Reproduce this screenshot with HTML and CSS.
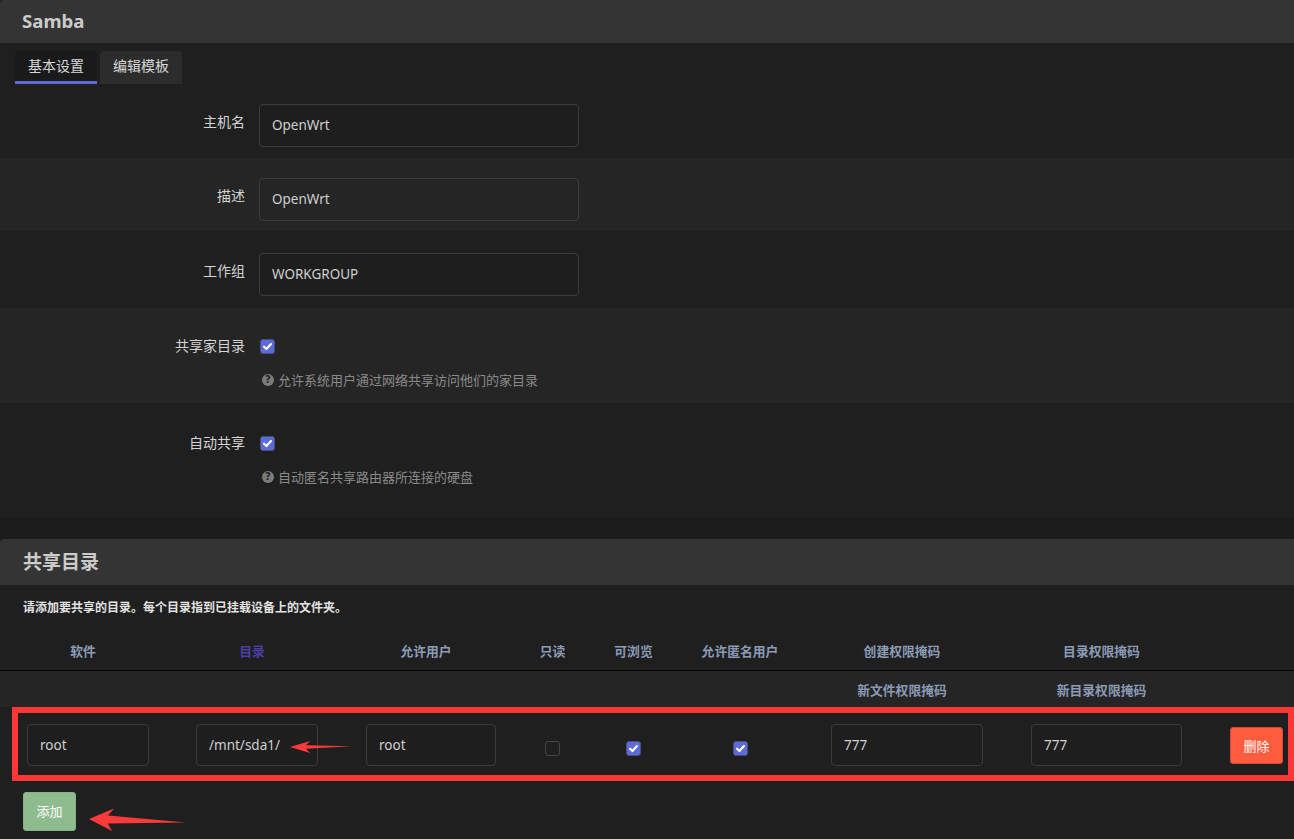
FILE: index.html
```html
<!DOCTYPE html>
<html lang="zh-CN">
<head>
<meta charset="utf-8">
<title>Samba</title>
<link rel="stylesheet" href="styles.css">
</head>
<body>
<div class="page">
  <section class="sec">
    <h2 class="sec-title">Samba</h2>
    <div class="tabs">
      <div class="tab active">基本设置</div>
      <div class="tab">编辑模板</div>
    </div>
    <div class="row r1">
      <label class="lbl">主机名</label>
      <div class="field"><div class="input">OpenWrt</div></div>
    </div>
    <div class="row r2 alt">
      <label class="lbl">描述</label>
      <div class="field"><div class="input">OpenWrt</div></div>
    </div>
    <div class="row r3">
      <label class="lbl">工作组</label>
      <div class="field"><div class="input">WORKGROUP</div></div>
    </div>
    <div class="row r4 alt">
      <label class="lbl">共享家目录</label>
      <div class="field">
        <div class="cbline"><span class="cb on"><svg viewBox="0 0 14 14"><path d="M3.3 7.2 L5.9 9.7 L10.7 4.4"/></svg></span></div>
        <div class="help"><span class="qi">?</span>允许系统用户通过网络共享访问他们的家目录</div>
      </div>
    </div>
    <div class="row r5">
      <label class="lbl">自动共享</label>
      <div class="field">
        <div class="cbline"><span class="cb on"><svg viewBox="0 0 14 14"><path d="M3.3 7.2 L5.9 9.7 L10.7 4.4"/></svg></span></div>
        <div class="help"><span class="qi">?</span>自动匿名共享路由器所连接的硬盘</div>
      </div>
    </div>
  </section>

  <section class="sec sec2">
    <h2 class="sec-title big">共享目录</h2>
    <div class="desc">请添加要共享的目录。每个目录指到已挂载设备上的文件夹。</div>
    <div class="thead t1">
      <div class="th in">软件</div>
      <div class="th in link">目录</div>
      <div class="th in">允许用户</div>
      <div class="th">只读</div>
      <div class="th">可浏览</div>
      <div class="th">允许匿名用户</div>
      <div class="th in">创建权限掩码</div>
      <div class="th in">目录权限掩码</div>
      <div class="th"></div>
    </div>
    <div class="thead t2">
      <div class="th"></div>
      <div class="th"></div>
      <div class="th"></div>
      <div class="th"></div>
      <div class="th"></div>
      <div class="th"></div>
      <div class="th in">新文件权限掩码</div>
      <div class="th in">新目录权限掩码</div>
      <div class="th"></div>
    </div>
    <div class="trow">
      <div class="td"><div class="input sm w122">root</div></div>
      <div class="td"><div class="input sm w122">/mnt/sda1/</div></div>
      <div class="td"><div class="input sm w130">root</div></div>
      <div class="td"><span class="cb off"></span></div>
      <div class="td"><span class="cb on"><svg viewBox="0 0 14 14"><path d="M3.3 7.2 L5.9 9.7 L10.7 4.4"/></svg></span></div>
      <div class="td"><span class="cb on"><svg viewBox="0 0 14 14"><path d="M3.3 7.2 L5.9 9.7 L10.7 4.4"/></svg></span></div>
      <div class="td"><div class="input sm w152">777</div></div>
      <div class="td"><div class="input sm w151">777</div></div>
      <div class="td left"><button class="btn del">删除</button></div>
    </div>
    <div class="actions"><button class="btn add">添加</button></div>
  </section>

  <svg class="annot" viewBox="0 0 1294 839" width="1294" height="839">
    <polygon points="290,747 310,741 306,745.2 352,746.2 306,748.8 310,753"/>
    <polygon points="89,819 114,808.5 108,815.5 186,822.5 108,823.5 112,831"/>
  </svg>
</div>
</body>
</html>
```

FILE: styles.css
```css
html, body {
  margin: 0;
  padding: 0;
}
body {
  background: #1b1b1b;
  font-family: "Noto Sans", "Noto Sans CJK SC", sans-serif;
  color: #d6d6d6;
  width: 1294px;
  height: 839px;
  overflow: hidden;
}
.page {
  position: relative;
  width: 1294px;
  height: 839px;
}
.sec {
  background: #1f1f1f;
}
.sec-title {
  margin: 0;
  height: 43px;
  line-height: 41px;
  padding-left: 22px;
  background: #343434;
  font-size: 18.6px;
  font-weight: 700;
  color: #cbcbcb;
  border-top-left-radius: 4px;
}
.sec-title.big {
  height: 46px;
  line-height: 46px;
  font-size: 19px;
  padding-left: 23px;
}
.tabs {
  display: flex;
  align-items: flex-end;
  gap: 3px;
  height: 41px;
  padding-left: 15px;
  box-sizing: border-box;
}
.tab {
  height: 33px;
  box-sizing: border-box;
  padding: 0 13px;
  line-height: 30px;
  font-size: 14px;
  color: #d8d8d8;
  background: #2c2c2c;
  border-radius: 4px 4px 0 0;
}
.tab.active {
  background: #1a1a1a;
  border-bottom: 3px solid #5e6bd9;
  padding: 0 13px;
}
.row {
  display: flex;
  align-items: flex-start;
  gap: 14px;
  box-sizing: border-box;
  padding-top: 20px;
}
.row.alt {
  background: #252525;
}
.r1 { height: 74px; }
.r2 { height: 72px; }
.r3 { height: 78px; padding-top: 23px; }
.r4 { height: 95px; padding-top: 20px; }
.r5 { height: 116px; padding-top: 22px; }
.lbl {
  width: 245px;
  text-align: right;
  font-size: 14px;
  line-height: 36px;
  color: #d4d4d4;
}
.input {
  width: 320px;
  height: 43px;
  box-sizing: border-box;
  border: 1px solid #3b3b3b;
  border-radius: 4px;
  background: #1e1e1e;
  padding: 0 12px;
  line-height: 41px;
  font-size: 13.5px;
  color: #cfcfcf;
}
.row.alt .input {
  background: #252525;
}
.cbline {
  height: 36px;
  display: flex;
  align-items: center;
  padding-left: 1px;
}
.cb {
  display: inline-block;
  width: 15px;
  height: 15px;
  box-sizing: border-box;
  border-radius: 3px;
}
.cb.on {
  background: #5d6ada;
  border: 1px solid #4a4f7a;
}
.cb.on svg {
  display: block;
  width: 13px;
  height: 13px;
}
.cb.on path {
  fill: none;
  stroke: #fff;
  stroke-width: 2.3;
  stroke-linecap: round;
  stroke-linejoin: round;
}
.cb.off {
  border: 1px solid #454545;
  background: #1f1f1f;
}
.help {
  margin-top: 8px;
  display: flex;
  align-items: center;
  font-size: 13px;
  line-height: 16px;
  color: #8a8a8a;
  padding-left: 3px;
}
.qi {
  display: inline-block;
  width: 12px;
  height: 12px;
  border-radius: 50%;
  background: #7b7b7b;
  color: #252525;
  font-size: 10px;
  font-weight: 700;
  line-height: 12px;
  text-align: center;
  margin-right: 4px;
  font-family: "DejaVu Sans", sans-serif;
}
.sec2 {
  margin-top: 20px;
  height: 300px;
}
.desc {
  padding: 16px 23px 15px;
  font-size: 12px;
  line-height: 14px;
  font-weight: 700;
  color: #e2e2e2;
}
.thead, .trow {
  display: grid;
  grid-template-columns: 140px 198px 150px 93px 69px 144px 190px 209px 1fr;
  align-items: center;
}
.thead {
  padding-left: 18px;
}
.t1 {
  height: 41px;
  box-sizing: border-box;
  border-bottom: 1px solid #050505;
}
.t2 {
  height: 36px;
  background: #252525;
}
.th {
  text-align: center;
  font-size: 12.8px;
  font-weight: 700;
  color: #8b9bb6;
}
.th.in {
  padding-right: 10px;
}
.th.link {
  color: #4b3da3;
}
.trow {
  margin-left: 12px;
  height: 74px;
  box-sizing: border-box;
  border: 6px solid #fd3636;
  background: #1f1f1f;
}
.td {
  display: flex;
  justify-content: center;
  align-items: center;
}
.td .cb {
  margin-top: 8px;
}
.td.left {
  justify-content: flex-start;
  padding-left: 19px;
}
.input.sm {
  height: 42px;
  line-height: 40px;
  font-size: 13.5px;
  margin-top: 2px;
}
.w122 { width: 122px; }
.w130 { width: 130px; }
.w152 { width: 152px; }
.w151 { width: 151px; }
.btn {
  font-family: "Noto Sans CJK SC", sans-serif;
  font-size: 13px;
  color: #fff;
  border-radius: 3px;
  cursor: pointer;
  padding: 0;
}
.btn.del {
  width: 53px;
  height: 37px;
  margin-top: 3px;
  background: #fd5d3e;
  border: 1px solid #d9473a;
}
.actions {
  padding: 11px 23px 0;
}
.btn.add {
  width: 53px;
  height: 39px;
  padding-bottom: 3px;
  background: #8fbc8f;
  border: 1px solid #86b286;
}
.annot {
  position: absolute;
  left: 0;
  top: 0;
  pointer-events: none;
}
.annot polygon {
  fill: #f83a3a;
}
```
